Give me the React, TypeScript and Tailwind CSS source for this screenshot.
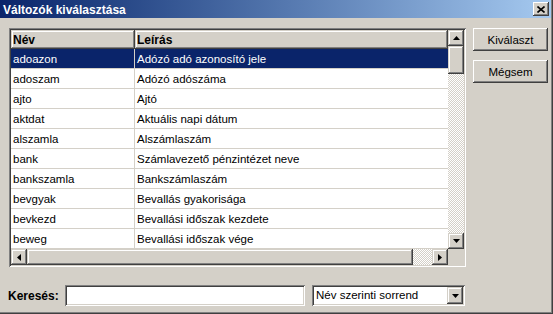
import React from 'react';

const rows = [
  { name: 'adoazon', desc: 'Adózó adó azonosító jele' },
  { name: 'adoszam', desc: 'Adózó adószáma' },
  { name: 'ajto', desc: 'Ajtó' },
  { name: 'aktdat', desc: 'Aktuális napi dátum' },
  { name: 'alszamla', desc: 'Alszámlaszám' },
  { name: 'bank', desc: 'Számlavezető pénzintézet neve' },
  { name: 'bankszamla', desc: 'Bankszámlaszám' },
  { name: 'bevgyak', desc: 'Bevallás gyakorisága' },
  { name: 'bevkezd', desc: 'Bevallási időszak kezdete' },
  { name: 'beweg', desc: 'Bevallási időszak vége' },
];

// classic 3D edges
const raised =
  'shadow-[inset_-1px_-1px_0_#404040,inset_1px_1px_0_#d4d0c8,inset_-2px_-2px_0_#808080,inset_2px_2px_0_#ffffff]';
const button =
  'shadow-[inset_-1px_-1px_0_#404040,inset_1px_1px_0_#ffffff,inset_-2px_-2px_0_#808080,inset_2px_2px_0_#d4d0c8]';
const sunken =
  'shadow-[inset_1px_1px_0_#808080,inset_-1px_-1px_0_#ffffff,inset_2px_2px_0_#404040,inset_-2px_-2px_0_#d4d0c8]';
const hatch =
  'bg-[repeating-conic-gradient(#d4d0c8_0%_25%,#ffffff_0%_50%)] bg-size-[2px_2px]';

function Arrow({ dir }: { dir: 'up' | 'down' | 'left' | 'right' }) {
  const pts = {
    up: '3.5,0 7,4 0,4',
    down: '0,0 7,0 3.5,4',
    left: '4,0 4,7 0,3.5',
    right: '0,0 4,3.5 0,7',
  }[dir];
  const vertical = dir === 'up' || dir === 'down';
  return (
    <svg width={vertical ? 7 : 4} height={vertical ? 4 : 7} viewBox={vertical ? '0 0 7 4' : '0 0 4 7'}>
      <polygon points={pts} fill="#000" />
    </svg>
  );
}

function ScrollButton({ dir }: { dir: 'up' | 'down' | 'left' | 'right' }) {
  return (
    <div className={`w-[16px] h-[16px] shrink-0 bg-[#d4d0c8] flex items-center justify-center ${raised}`}>
      <Arrow dir={dir} />
    </div>
  );
}

export default function App() {
  return (
    <div
      className="w-[553px] h-[314px] bg-[#d4d0c8] border-r border-b border-[#404040] overflow-hidden text-black"
      style={{ fontFamily: '"Liberation Sans", Arial, sans-serif' }}
    >
      <div className="h-full border-r border-b border-[#808080] flex flex-col">
        {/* Title bar */}
        <div className="h-[18px] shrink-0 bg-gradient-to-r from-[#0a246a] to-[#a6caf0] flex items-center justify-between pl-[3px] pr-[2px]">
          <span className="text-white font-bold text-[12px] leading-none pt-[1px]">Változók kiválasztása</span>
          <div className={`w-[16px] h-[14px] bg-[#d4d0c8] flex items-center justify-center ${button}`}>
            <svg width="8" height="7" viewBox="0 0 8 7">
              <path d="M0.5 0.5 L7.5 6.5 M7.5 0.5 L0.5 6.5" stroke="#000" strokeWidth="1.6" />
            </svg>
          </div>
        </div>

        {/* Body */}
        <div className="pl-[9px] pt-[10px] flex flex-col">
          <div className="flex">
            {/* Grid */}
            <div className={`w-[457px] h-[239px] p-[2px] bg-[#d4d0c8] ${sunken}`}>
              <div className="grid grid-cols-[437px_16px] grid-rows-[219px_16px]">
                <div className="bg-white overflow-hidden">
                  <div className="flex h-[19px] bg-[#d4d0c8] text-[12px] font-bold">
                    <div className={`w-[124px] pl-[2px] pt-[1px] flex items-center ${raised}`}>Név</div>
                    <div className={`flex-1 pl-[2px] pt-[1px] flex items-center ${raised}`}>Leírás</div>
                  </div>
                  {rows.map((r, i) => (
                    <div
                      key={r.name}
                      className={`flex h-[20px] text-[11.5px] border-b border-[#d4d0c8] ${
                        i === 0 ? 'bg-[#0a246a] text-white' : ''
                      }`}
                    >
                      <div className="w-[124px] pl-[2px] pt-[2px] flex items-center border-r border-[#d4d0c8]">{r.name}</div>
                      <div className="flex-1 pl-[2px] pt-[2px] flex items-center">{r.desc}</div>
                    </div>
                  ))}
                </div>

                {/* Vertical scrollbar */}
                <div className={`flex flex-col ${hatch}`}>
                  <ScrollButton dir="up" />
                  <div className={`h-[28px] bg-[#d4d0c8] ${raised}`} />
                  <div className="flex-1" />
                  <ScrollButton dir="down" />
                </div>

                {/* Horizontal scrollbar */}
                <div className={`flex ${hatch}`}>
                  <ScrollButton dir="left" />
                  <div className={`w-[386px] bg-[#d4d0c8] ${raised}`} />
                  <div className="flex-1" />
                  <ScrollButton dir="right" />
                </div>
                <div className="bg-[#d4d0c8]" />
              </div>
            </div>

            {/* Buttons */}
            <div className="ml-[7px] flex flex-col gap-[9px]">
              <div className={`w-[75px] h-[23px] pt-[2px] flex items-center justify-center text-[11.5px] ${button}`}>
                Kiválaszt
              </div>
              <div className={`w-[75px] h-[23px] pt-[2px] flex items-center justify-center text-[11.5px] ${button}`}>
                Mégsem
              </div>
            </div>
          </div>

          {/* Search row */}
          <div className="mt-[18px] flex items-center -ml-[1px]">
            <span className="w-[57px] pt-[1px] text-[12px] font-bold">Keresés:</span>
            <div className={`w-[240px] h-[21px] bg-white ${sunken}`} />
            <div className={`ml-[7px] w-[153px] h-[21px] bg-white p-[2px] flex items-center ${sunken}`}>
              <span className="flex-1 pl-[2px] pt-[1px] text-[11.5px] leading-none">Név szerinti sorrend</span>
              <div className={`w-[16px] h-[17px] bg-[#d4d0c8] flex items-center justify-center ${raised}`}>
                <Arrow dir="down" />
              </div>
            </div>
          </div>
        </div>
      </div>
    </div>
  );
}
